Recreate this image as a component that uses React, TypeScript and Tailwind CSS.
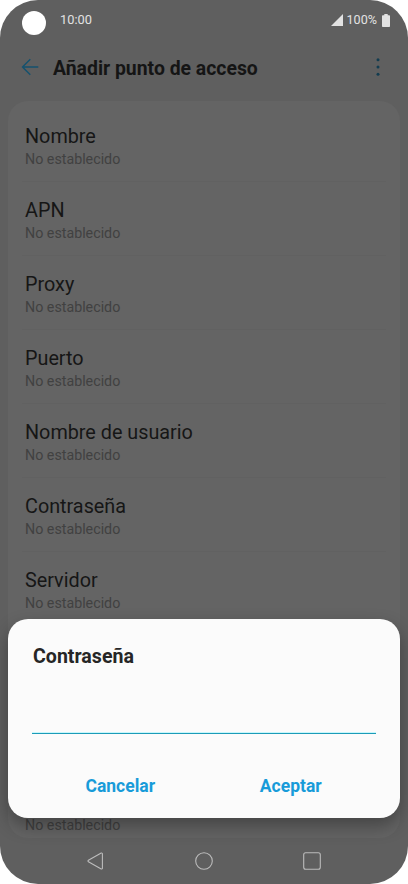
type Setting = {
  name: string;
  value: string;
};

const settings: Setting[] = [
  { name: "Nombre", value: "No establecido" },
  { name: "APN", value: "No establecido" },
  { name: "Proxy", value: "No establecido" },
  { name: "Puerto", value: "No establecido" },
  { name: "Nombre de usuario", value: "No establecido" },
  { name: "Contraseña", value: "No establecido" },
  { name: "Servidor", value: "No establecido" },
];

function StatusBar() {
  return (
    <div className="flex h-10 items-center pl-[22px] pr-[18px] text-[#e2e2e2]">
      <span className="mt-[6px] size-6 rounded-full bg-white" />
      <span className="ml-[14px] text-[12.8px] leading-4">10:00</span>
      <div className="ml-auto flex items-center">
        <svg width="12" height="12" viewBox="0 0 12 12" fill="currentColor">
          <path d="M12 0v12H0z" />
        </svg>
        <span className="ml-1 text-[12.6px] leading-4">100%</span>
        <svg className="ml-[5px]" width="8" height="13" viewBox="0 0 8 13" fill="currentColor">
          <path d="M2.3 0h3.4v1.2H7.2a.8.8 0 0 1 .8.8v10.2a.8.8 0 0 1-.8.8H.8a.8.8 0 0 1-.8-.8V2a.8.8 0 0 1 .8-.8h1.5z" />
        </svg>
      </div>
    </div>
  );
}

function Header() {
  return (
    <header className="flex h-[61px] items-center pb-[7px] pl-[21px] pr-[26px]">
      <button aria-label="Atrás" className="text-[#14526f]">
        <svg width="18" height="18" viewBox="0 0 18 18" fill="none" stroke="currentColor" strokeWidth="1.4">
          <path d="M17.3 9H1.5M9.3 1.2 1.5 9l7.8 7.8" />
        </svg>
      </button>
      <h1 className="ml-[14px] pt-[3px] text-[19.4px] font-bold leading-6 text-[#151515]">Añadir punto de acceso</h1>
      <button aria-label="Más opciones" className="ml-auto text-[#123c50]">
        <svg width="8" height="20" viewBox="0 0 8 20" fill="currentColor">
          <circle cx="4" cy="2.7" r="1.5" />
          <circle cx="4" cy="10" r="1.5" />
          <circle cx="4" cy="17.3" r="1.5" />
        </svg>
      </button>
    </header>
  );
}

function SettingRow({ name, value }: Setting) {
  return (
    <li className="mr-[14px] h-[74px] border-b border-[#616161] pt-[17px]">
      <div className="ml-[3px] text-[19.8px] leading-6 text-[#161616]">{name}</div>
      <div className="ml-[3px] text-[14.25px] leading-5 text-[#414141]">{value}</div>
    </li>
  );
}

function PasswordDialog() {
  return (
    <div
      role="dialog"
      className="absolute inset-x-2 top-[619.4px] h-[198.2px] rounded-[20px] bg-[#fbfbfb] px-6 shadow-[0_8px_18px_rgba(0,0,0,0.32)]"
    >
      <h2 className="ml-px pt-[26px] text-[19.6px] font-bold leading-6 text-[#262626]">Contraseña</h2>
      <div className="mt-[63px] h-[2px] border-b border-[#1c9bb8] bg-[#c8f7fb]" />
      <div className="mt-[40px] grid grid-cols-2 pl-[3px] text-center text-[17.5px] font-bold leading-6 text-[#189bd9]">
        <button>Cancelar</button>
        <button>Aceptar</button>
      </div>
    </div>
  );
}

function NavigationBar() {
  return (
    <nav className="flex h-[46px] items-center justify-between pb-px pl-[86px] pr-[87px] text-[#bcbcbc]">
      <svg width="18" height="18" viewBox="0 0 18 18" fill="none" stroke="currentColor" strokeWidth="1.1" strokeLinejoin="round">
        <path d="M15.2 1.1 2.4 8.3a.8.8 0 0 0 0 1.4l12.8 7.2a.8.8 0 0 0 1.2-.7V1.8a.8.8 0 0 0-1.2-.7z" />
      </svg>
      <svg width="18" height="18" viewBox="0 0 18 18" fill="none" stroke="currentColor" strokeWidth="1.1">
        <circle cx="9" cy="9" r="8.3" />
      </svg>
      <svg width="18" height="18" viewBox="0 0 18 18" fill="none" stroke="currentColor" strokeWidth="1.1">
        <rect x=".7" y=".7" width="16.6" height="16.6" rx="2" />
      </svg>
    </nav>
  );
}

export default function App() {
  return (
    <div className="h-[884px] w-[408px] bg-white font-['Roboto',sans-serif]">
      <div className="relative flex h-full flex-col overflow-hidden rounded-[38px] bg-[#5f5f5f]">
        <StatusBar />
        <Header />
        <main className="mx-2 flex h-[737px] flex-col justify-between rounded-[20px] bg-[#646464] pb-[3px] pl-[14px] pt-[7px]">
          <ul>
            {settings.map((setting) => (
              <SettingRow key={setting.name} {...setting} />
            ))}
          </ul>
          <div className="ml-[3px] text-[14.25px] leading-5 text-[#414141]">No establecido</div>
        </main>
        <NavigationBar />
        <PasswordDialog />
      </div>
    </div>
  );
}
